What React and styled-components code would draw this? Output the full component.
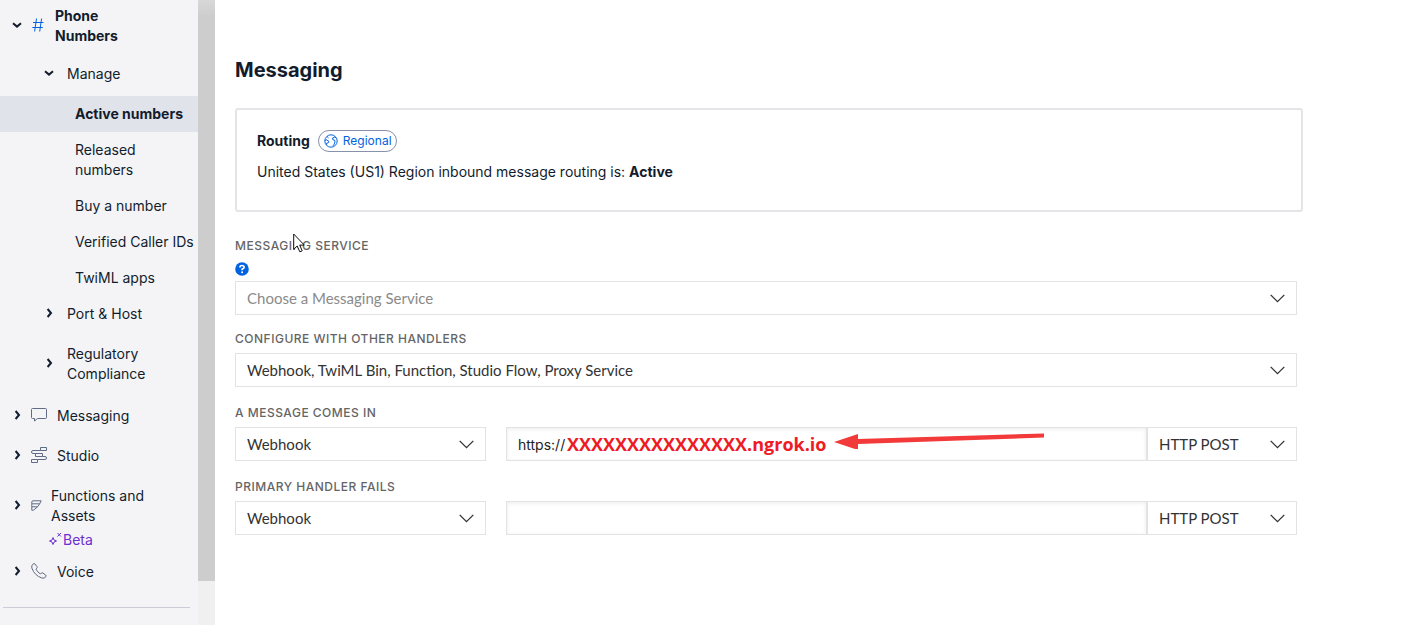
import React from "react";
import styled, { createGlobalStyle, css } from "styled-components";

const Global = createGlobalStyle`
  *, *::before, *::after { box-sizing: border-box; }
  html, body { margin: 0; padding: 0; }
  body {
    background: #fff;
    color: #121c2d;
    font-family: Inter, "Liberation Sans", sans-serif;
    font-size: 14px;
    line-height: 20px;
  }
`;

const Page = styled.div`
  display: flex;
  min-height: 100vh;
`;

const Sidebar = styled.nav`
  flex: none;
  width: 198px;
  background: #f4f4f6;
`;

const NavList = styled.ul`
  list-style: none;
  margin: 0;
  padding: 0;
  display: flex;
  flex-direction: column;
  gap: 4px;
`;

const SectionList = styled(NavList)`
  gap: 0;
`;

const PageList = styled(NavList)`
  gap: 0;
  margin: 2px 0 -2px;
`;

const NavLink = styled.a`
  display: flex;
  align-items: center;
  padding: 8px 0;
  color: inherit;
  text-decoration: none;
`;

const ProductLink = styled(NavLink)`
  padding-left: 12px;
  ${(p) => p.$current && css`
    padding-top: 6px;
    font-weight: 700;
  `}
`;

const SectionLink = styled(NavLink)`
  padding: 10px 0 10px 44px;
`;

const PageLink = styled(NavLink)`
  padding-left: 75px;
  white-space: nowrap;
  ${(p) => p.$current && css`
    background: #e1e3ea;
    font-weight: 700;
  `}
`;

const Caret = styled.svg`
  flex: none;
  width: 10px;
  height: 10px;
  margin-bottom: 2px;
  fill: none;
  stroke: #121c2d;
  stroke-width: 2;
`;

const IconSlot = styled.span`
  flex: none;
  display: flex;
  width: ${(p) => p.$width}px;
  margin: 0 0 2px 9px;
`;

const SectionName = styled.span`
  margin-left: 13px;
  max-width: 100px;
`;

const ProductName = styled.span`
  max-width: ${(p) => (p.$current ? 80 : 110)}px;
`;

const Beta = styled.span`
  display: flex;
  align-items: center;
  margin: -4px 0 0 49px;
  color: #6d2ed1;
`;

const Rule = styled.hr`
  margin: 17px 8px 0 3px;
  border: 0;
  border-top: 1px solid #cacdd8;
`;

const ScrollTrack = styled.div`
  flex: none;
  width: 17px;
  background: #f0f0f0;
`;

const ScrollThumb = styled.div`
  height: 93vh;
  background: linear-gradient(#d8d8d8, #cdcdcd 16px);
`;

const Main = styled.main`
  flex: 1;
  min-width: 0;
  padding: 58px 119px 40px 20px;
`;

const Title = styled.h1`
  margin: 0 0 26px;
  font-size: 20px;
  line-height: 24px;
  font-weight: 700;
`;

const Card = styled.section`
  border: 2px solid #e3e5e9;
  border-radius: 3px;
  padding: 20px 20px 28px;
`;

const CardHead = styled.div`
  display: flex;
  align-items: center;
  gap: 8px;
  margin-bottom: 10px;
`;

const CardTitle = styled.h2`
  margin: 0;
  font-size: 14px;
  font-weight: 700;
`;

const Badge = styled.span`
  display: flex;
  align-items: center;
  gap: 5px;
  height: 22px;
  padding: 0 4px 0 5px;
  border: 1px solid #8891aa;
  border-radius: 11px;
  color: #0263e0;
  font-size: 12px;
`;

const Text = styled.p`
  margin: 0;
`;

const Form = styled.form`
  padding: 24px 6px 0 0;
`;

const Field = styled.div`
  position: relative;
  margin-top: ${(p) => p.$gap || 0}px;
`;

const Label = styled.label`
  display: block;
  margin-bottom: 4px;
  color: #656565;
  font-size: 12px;
  font-weight: 500;
  letter-spacing: 0.5px;
  line-height: 20px;
`;

const HelpButton = styled.button`
  display: block;
  width: 14px;
  height: 14px;
  margin: 6px 0 5px;
  padding: 0;
  border: 0;
  background: none;
`;

const HandlerRow = styled.div`
  display: flex;
`;

const SelectBox = styled.div`
  position: relative;
  flex: ${(p) => (p.$width ? `none` : `1`)};
  width: ${(p) => (p.$width ? `${p.$width}px` : `auto`)};
`;

const Select = styled.select`
  display: block;
  width: 100%;
  height: 34px;
  margin: 0;
  padding: 0 40px 0 11px;
  appearance: none;
  border: 1px solid #e3e3e3;
  border-radius: 0;
  background: #fff;
  color: ${(p) => (p.$empty ? "#8a8a8a" : "#333")};
  font-family: Lato, sans-serif;
  font-size: 15px;
`;

const SelectArrow = styled.svg`
  position: absolute;
  right: 12px;
  top: 13px;
  width: 15px;
  height: 9px;
  fill: none;
  stroke: #333;
  stroke-width: 1.3;
  pointer-events: none;
`;

const UrlBox = styled.div`
  position: relative;
  flex: 1;
  margin-left: 20px;
`;

const UrlInput = styled.input`
  display: block;
  width: 100%;
  height: 34px;
  padding: 0 11px;
  border: 1px solid #e3e3e3;
  border-radius: 0;
  box-shadow: inset 0 1px 4px rgba(0, 0, 0, 0.08);
  color: #222;
  font-family: Inter, sans-serif;
  font-size: 14px;
`;

const Annotation = styled.div`
  position: absolute;
  left: 61px;
  top: 4px;
  display: flex;
  gap: 8px;
  pointer-events: none;
  color: #ed1c24;
  font-family: "Open Sans", sans-serif;
  font-size: 18px;
  line-height: 26px;
  font-weight: 700;
`;

const Pointer = styled.svg`
  position: absolute;
  left: 58px;
  top: -3px;
`;

function CaretIcon({ open }) {
  return (
    <Caret viewBox="0 0 10 10" aria-hidden="true">
      <path d={open ? "M1 3.2 5 6.6 9 3.2" : "M3.6 1 7 5 3.6 9"} />
    </Caret>
  );
}

const line = { fill: "none", stroke: "#606b85", strokeWidth: 1 };

const HashIcon = () => (
  <svg width="13" height="16" viewBox="0 0 13 16" fill="none" stroke="#0263e0">
    <path d="M5.500 1.500 3.600 14.500M10.600 1.500 8.700 14.500M2 5.500h10.500M1.300 10.500h10.500" />
  </svg>
);
const ChatIcon = () => (
  <svg width="16" height="16" viewBox="0 0 16 16" {...line}>
    <path d="M1.5 1.5h13q1 0 1 1v8q0 1-1 1H6.5l-3 2.5v-2.5h-2q-1 0-1-1v-8q0-1 1-1Z" />
  </svg>
);
const StudioIcon = () => (
  <svg width="16" height="16" viewBox="0 0 16 16" {...line}>
    <path d="M9.500.500h6v3h-6ZM9.500 3.500H2Q.500 3.500.500 5T2 6.500h2.500M4.500 6.500h7v3h-7ZM11.500 9.500H14q1.500 0 1.500 1.500T14 12.500H6.500M.500 12.500h6v3h-6Z" />
  </svg>
);
const FunctionsIcon = () => (
  <svg width="11" height="11" viewBox="0 0 11 11" {...line}>
    <path d="M2 .8h8.200L8.700 3.800H.8V2Q.8.800 2 .8ZM.8 3.800v3h5.700l2.200-3M.8 6.800v3.400h1.700l4-3.400" />
  </svg>
);
const PhoneIcon = () => (
  <svg width="16" height="16" viewBox="0 0 16 16" {...line}>
    <path d="M2.200.9Q3.200.1 4 1l2 2.700q.6.900-.2 1.600l-.9.800q1.500 3 4.500 4.900l.9-.9q.8-.7 1.700 0l2.700 2q.9.800.1 1.700-1.500 2-4 1.200Q3.500 12.500.8 5 .2 2.500 2.200.9Z" />
  </svg>
);
const SparkleIcon = () => (
  <svg width="14" height="16" viewBox="0 0 14 16" fill="none" stroke="#6d2ed1">
    <path d="M4 5.500 5 8l2.500 1L5 10 4 12.500 3 10 .5 9 3 8ZM8.500 1l3.500 3.500M12 1 8.500 4.500" />
  </svg>
);
const GlobeIcon = () => (
  <svg width="14" height="14" viewBox="0 0 14 14" fill="none" stroke="#0263e0">
    <circle cx="7" cy="7" r="6.200" />
    <path d="M1 6.500 2.500 5.800l2.300 1.400-.6 1.700-1.700.4v1.500M3 2.500l1.500 1.300M12.300 4.200 10.800 3 8.600 4l.2 1.700 1.900.5.300 1.800-1 2.500-1.200 1.500" />
  </svg>
);

function Product({ icon, width, gap, name, open, current, badge, children }) {
  return (
    <li>
      <ProductLink href="#" $current={current}>
        <CaretIcon open={open} />
        <IconSlot $width={width + gap}>{icon}</IconSlot>
        <ProductName $current={current}>{name}</ProductName>
      </ProductLink>
      {badge}
      {children}
    </li>
  );
}

function Section({ name, open, children }) {
  return (
    <li>
      <SectionLink href="#">
        <CaretIcon open={open} />
        <SectionName>{name}</SectionName>
      </SectionLink>
      {children}
    </li>
  );
}

function Dropdown({ id, label, value, width, empty }) {
  return (
    <SelectBox $width={width}>
      <Select id={id} aria-label={label} $empty={empty} defaultValue={value}>
        <option>{value}</option>
      </Select>
      <SelectArrow viewBox="0 0 15 9" aria-hidden="true">
        <path d="M.7.900 7.500 7.700 14.300.9" />
      </SelectArrow>
    </SelectBox>
  );
}

function Handler({ id, label, url, children }) {
  return (
    <Field $gap={16}>
      <Label htmlFor={id}>{label}</Label>
      <HandlerRow>
        <Dropdown id={id} value="Webhook" width={251} />
        <UrlBox>
          <UrlInput type="text" aria-label={`${label} URL`} defaultValue={url} />
          {children}
        </UrlBox>
        <Dropdown label={`${label} method`} value="HTTP POST" width={150} />
      </HandlerRow>
    </Field>
  );
}

export default function App() {
  return (
    <Page>
      <Global />
      <Sidebar aria-label="Products">
        <NavList>
          <Product icon={<HashIcon />} width={13} gap={11} name="Phone Numbers" open current>
            <SectionList>
              <Section name="Manage" open>
                <PageList>
                  <li><PageLink href="#" $current>Active numbers</PageLink></li>
                  <li><PageLink href="#">Released<br />numbers</PageLink></li>
                  <li><PageLink href="#">Buy a number</PageLink></li>
                  <li><PageLink href="#">Verified Caller IDs</PageLink></li>
                  <li><PageLink href="#">TwiML apps</PageLink></li>
                </PageList>
              </Section>
              <Section name="Port & Host" />
              <Section name="Regulatory Compliance" />
            </SectionList>
          </Product>
          <Product icon={<ChatIcon />} width={16} gap={10} name="Messaging" />
          <Product icon={<StudioIcon />} width={16} gap={10} name="Studio" />
          <Product
            icon={<FunctionsIcon />}
            width={11}
            gap={9}
            name="Functions and Assets"
            badge={<Beta><SparkleIcon />Beta</Beta>}
          />
          <Product icon={<PhoneIcon />} width={16} gap={10} name="Voice" />
        </NavList>
        <Rule />
      </Sidebar>
      <ScrollTrack><ScrollThumb /></ScrollTrack>
      <Main>
        <Title>Messaging</Title>
        <Card>
          <CardHead>
            <CardTitle>Routing</CardTitle>
            <Badge><GlobeIcon />Regional</Badge>
          </CardHead>
          <Text>United States (US1) Region inbound message routing is: <b>Active</b></Text>
        </Card>
        <Form>
          <Field>
            <Label htmlFor="service">MESSAGING SERVICE</Label>
            <HelpButton type="button" aria-label="Help">
              <svg width="14" height="14" viewBox="0 0 14 14" fill="none">
                <circle cx="7" cy="7" r="6.800" fill="#0263e0" />
                <path d="M4.900 5.500q0-2 2.100-2t2.100 1.800Q9.100 6.500 7.100 7.300v1" stroke="#fff" strokeWidth="1.700" />
                <circle cx="7.100" cy="10.300" r="1" fill="#fff" />
              </svg>
            </HelpButton>
            <Dropdown id="service" value="Choose a Messaging Service" empty />
            <Pointer width="12" height="20" viewBox="0 0 12 20" aria-hidden="true">
              <path d="M.7 1v15.300l3.500-3.300 2.600 5.800 2.400-1-2.500-5.700h4.600Z" fill="#fff" stroke="#111" />
            </Pointer>
          </Field>
          <Field $gap={14}>
            <Label htmlFor="handlers">CONFIGURE WITH OTHER HANDLERS</Label>
            <Dropdown id="handlers" value="Webhook, TwiML Bin, Function, Studio Flow, Proxy Service" />
          </Field>
          <Handler id="incoming" label="A MESSAGE COMES IN" url="https://">
            <Annotation>
              <span>XXXXXXXXXXXXXXX.ngrok.io</span>
              <svg width="212" height="18" viewBox="0 0 212 18" aria-hidden="true">
                <path d="M0 11 24 3v5L210 2.500v4L24 13v6Z" fill="#f23a3a" />
              </svg>
            </Annotation>
          </Handler>
          <Handler id="fallback" label="PRIMARY HANDLER FAILS" url="" />
        </Form>
      </Main>
    </Page>
  );
}
